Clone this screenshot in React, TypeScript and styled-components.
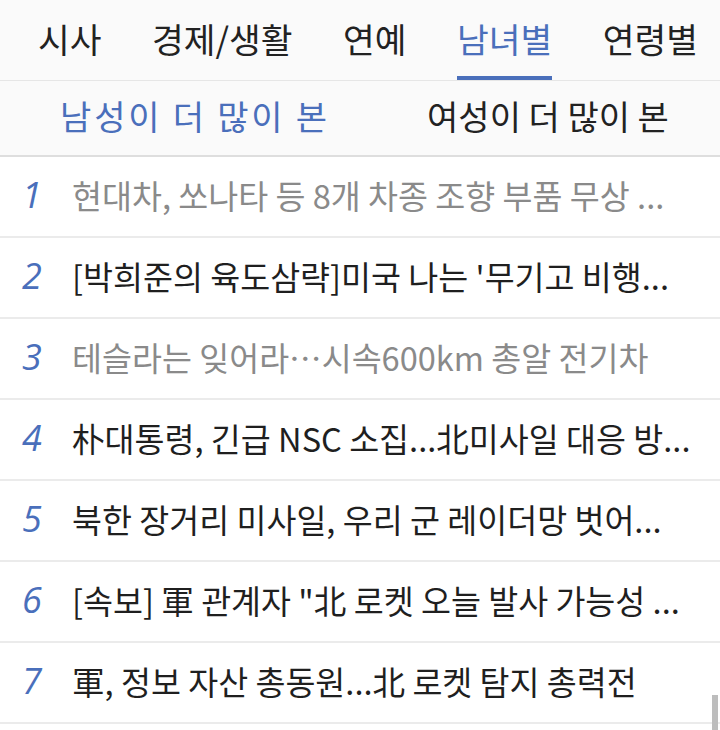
import React from "react";
import styled, { createGlobalStyle } from "styled-components";

const Global = createGlobalStyle`
  html, body { margin: 0; padding: 0; background: #ffffff; }
  body { font-family: "Noto Sans CJK KR", "Noto Sans", sans-serif; overflow: hidden; }
  * { box-sizing: border-box; }
`;

const BLUE = "#4a6fbb";

const Page = styled.div`
  width: 720px;
  display: flex;
  flex-direction: column;
`;

const TabBar = styled.nav`
  height: 81px;
  background: #fafafa;
  border-bottom: 1px solid #e6e6e6;
  display: flex;
  justify-content: space-between;
  padding: 0 22px 0 38px;
`;

const Tab = styled.div<{ $active?: boolean }>`
  height: 80px;
  display: flex;
  align-items: center;
  font-size: 34.5px;
  line-height: 1;
  color: ${(p) => (p.$active ? BLUE : "#222222")};
  border-bottom: 4px solid ${(p) => (p.$active ? BLUE : "transparent")};
  margin-bottom: 1px;
`;

const SubBar = styled.div`
  height: 76px;
  background: #fafafa;
  border-bottom: 2px solid #dedede;
  display: grid;
  grid-template-columns: 1fr 1fr;
`;

const SubTab = styled.div<{ $active?: boolean }>`
  display: flex;
  align-items: center;
  justify-content: center;
  font-size: 34px;
  line-height: 1;
  white-space: nowrap;
  color: ${(p) => (p.$active ? BLUE : "#222222")};
  letter-spacing: ${(p) => (p.$active ? "2.8px" : "0")};
  padding-left: ${(p) => (p.$active ? "30px" : "16px")};
  padding-bottom: 4px;
`;

const List = styled.ol`
  list-style: none;
  margin: 0;
  padding: 0;
`;

const Row = styled.li`
  height: 81px;
  border-bottom: 2px solid #ebebeb;
  display: flex;
  align-items: center;
  padding-right: 6px;
`;

const Rank = styled.span`
  width: 72px;
  flex: none;
  padding-left: 22px;
  font-family: "Open Sans", "Noto Sans", sans-serif;
  font-style: italic;
  font-weight: 400;
  font-size: 36px;
  color: ${BLUE};
  line-height: 1;
  padding-bottom: 4px;
`;

const Title = styled.span<{ $visited?: boolean }>`
  flex: 1;
  min-width: 0;
  white-space: nowrap;
  font-size: 32.6px;
  line-height: 1.5;
  color: ${(p) => (p.$visited ? "#8a8a8a" : "#1f1f1f")};
  padding-bottom: 2px;
`;

const ScrollThumb = styled.div`
  position: fixed;
  right: 2px;
  top: 695px;
  width: 6px;
  height: 40px;
  background: #bdbdbd;
`;

const tabs = ["시사", "경제/생활", "연예", "남녀별", "연령별"];

const items: { title: string; visited?: boolean }[] = [
  { title: "현대차, 쏘나타 등 8개 차종 조향 부품 무상 ...", visited: true },
  { title: "[박희준의 육도삼략]미국 나는 '무기고 비행..." },
  { title: "테슬라는 잊어라⋯시속600km 총알 전기차", visited: true },
  { title: "朴대통령, 긴급 NSC 소집...北미사일 대응 방..." },
  { title: "북한 장거리 미사일, 우리 군 레이더망 벗어..." },
  { title: "[속보] 軍 관계자 \"北 로켓 오늘 발사 가능성 ..." },
  { title: "軍, 정보 자산 총동원...北 로켓 탐지 총력전" },
];

export default function App() {
  return (
    <Page>
      <Global />
      <TabBar>
        {tabs.map((t) => (
          <Tab key={t} $active={t === "남녀별"}>
            {t}
          </Tab>
        ))}
      </TabBar>
      <SubBar>
        <SubTab $active>남성이 더 많이 본</SubTab>
        <SubTab>여성이 더 많이 본</SubTab>
      </SubBar>
      <List>
        {items.map((it, i) => (
          <Row key={i}>
            <Rank>{i + 1}</Rank>
            <Title $visited={it.visited}>{it.title}</Title>
          </Row>
        ))}
      </List>
      <ScrollThumb />
    </Page>
  );
}
